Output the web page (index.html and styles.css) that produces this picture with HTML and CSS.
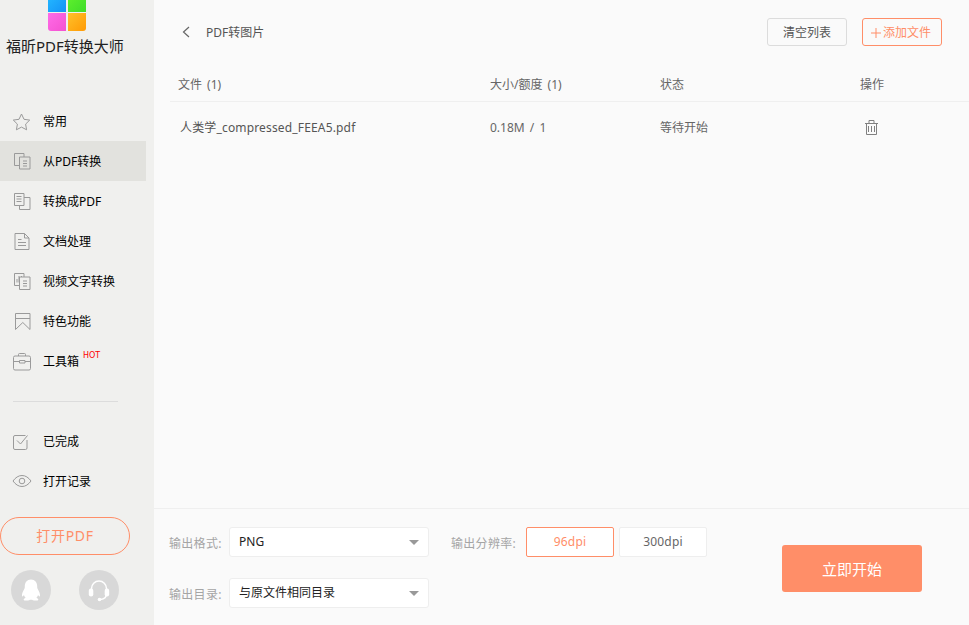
FILE: index.html
```html
<!DOCTYPE html>
<html lang="zh-CN">
<head>
<meta charset="utf-8">
<title>福昕PDF转换大师</title>
<link rel="stylesheet" href="styles.css">
</head>
<body>
<div class="app">
  <aside class="sidebar">
    <div class="logo">
      <span class="tile t1"></span><span class="tile t2"></span><span class="tile t3"></span><span class="tile t4"></span>
    </div>
    <div class="brand">福昕PDF转换大师</div>
    <nav class="nav">
      <div class="nav-item"><svg class="ico" viewBox="0 0 20 20"><path d="M9.500 3l2.500 5.300 5.700.8-4.100 4 1 5.700-5.100-2.700-5.100 2.700 1-5.700-4.100-4 5.700-.8z"/></svg><span class="nav-text">常用</span></div>
      <div class="nav-item active"><svg class="ico" viewBox="0 0 20 20"><path d="M7.500 14.500h-5v-12H12V6M7.500 6h10.500v12H7.500zM11 10h4M11 12.500h4M11 15h4"/></svg><span class="nav-text">从PDF转换</span></div>
      <div class="nav-item"><svg class="ico" viewBox="0 0 20 20"><path d="M2.500 2.500H12v12H2.500zM12 6.500h6V18.500H7.500v-4M4.500 5.500h5M4.500 8h5M4.500 10.500h5"/></svg><span class="nav-text">转换成PDF</span></div>
      <div class="nav-item"><svg class="ico" viewBox="0 0 20 20"><path d="M3 2.500h9.500L17 7v11.500H3zM12.500 2.500V7H17M6 8.500h3.500M6 11.500h8M6 14.500h8"/></svg><span class="nav-text">文档处理</span></div>
      <div class="nav-item"><svg class="ico" viewBox="0 0 20 20"><path d="M7.500 14.500h-5v-12H12V6M7.500 6h10.500v12.500H7.500zM5 8v3.500M7 5v6.500M9.500 5v1M11 10h4M11 12.500h4M11 15h4"/></svg><span class="nav-text">视频文字转换</span></div>
      <div class="nav-item"><svg class="ico" viewBox="0 0 20 20"><path d="M3.500 2.500h14.500v16l-7.200-7-7.300 7zM3.500 7.500h14.500"/></svg><span class="nav-text">特色功能</span></div>
      <div class="nav-item"><svg class="ico" viewBox="0 0 20 20"><path d="M1.500 6.500a1.500 1.500 0 0 1 1.500-1.500h14a1.500 1.500 0 0 1 1.500 1.500v11a1.500 1.500 0 0 1-1.500 1.500H3a1.500 1.500 0 0 1-1.500-1.500zM6.500 5V3.500a1 1 0 0 1 1-1h5a1 1 0 0 1 1 1V5M1.500 10.500h6M13 10.500h5.500M7.500 9.500h5.500v2.500H7.500z"/></svg><span class="nav-text">工具箱</span><sup class="hot">HOT</sup></div>
    </nav>
    <div class="divider"></div>
    <nav class="nav">
      <div class="nav-item"><svg class="ico" viewBox="0 0 20 20"><path d="M15 9v8a1.500 1.500 0 0 1-1.500 1.500H3A1.500 1.500 0 0 1 1.500 17V6A1.500 1.500 0 0 1 3 4.500h10.500M5 9.500l3.500 3.500 7-8.500"/></svg><span class="nav-text">已完成</span></div>
      <div class="nav-item"><svg class="ico" viewBox="0 0 20 20"><path d="M1 10C3.500 6.500 6.500 4.500 10 4.500s6.500 2 9 5.500c-2.500 3.500-5.500 5.500-9 5.500S3.500 13.500 1 10z"/><circle cx="10" cy="10" r="2.800"/></svg><span class="nav-text">打开记录</span></div>
    </nav>
    <button class="open-btn"><span class="open-text">打开PDF</span></button>
    <div class="contacts">
      <div class="circle">
        <svg viewBox="0 0 24 24" class="circle-ico"><path d="M12 1.500c-4 0-6.200 3-6.200 6.800 0 1.100 0 1.700-.5 2.700-1.300 2.200-2.600 4.700-2.300 6.800.2 1 .9.700 1.900-.9.300 1.100.9 2 1.700 2.800-1.200.5-2.100 1.200-1.900 2 .3 1 2.200 1 4.200.8 1-.1 1.600-.5 2-.7h2.200c.4.200 1 .6 2 .7 2 .2 3.900.2 4.200-.8.200-.8-.7-1.500-1.900-2 .8-.8 1.400-1.700 1.700-2.800 1 1.600 1.700 1.900 1.900.9.300-2.100-1-4.600-2.300-6.800-.5-1-.5-1.600-.5-2.700 0-3.800-2.200-6.800-6.200-6.800z"/></svg>
      </div>
      <div class="circle">
        <svg viewBox="0 0 24 24" class="circle-ico"><path class="band" d="M4.500 14V10.500a7.500 7.500 0 0 1 15 0V14M19.500 16c0 3.500-2.500 5-6 5.500"/><rect x="1.800" y="10.500" width="4.500" height="8" rx="2.200"/><rect x="17.700" y="10.500" width="4.500" height="8" rx="2.200"/><circle cx="12.500" cy="21.500" r="1.800"/></svg>
      </div>
    </div>
  </aside>
  <main class="main">
    <header class="topbar">
      <svg class="back" viewBox="0 0 8 12"><path d="M7 1L1.500 6 7 11"/></svg>
      <span class="page-title">PDF转图片</span>
      <button class="btn btn-plain">清空列表</button>
      <button class="btn btn-accent"><svg class="plus" viewBox="0 0 10 10"><path d="M5 0v10M0 5h10"/></svg>添加文件</button>
    </header>
    <section class="table">
      <div class="row head">
        <span>文件 (1)</span><span>大小/额度 (1)</span><span>状态</span><span>操作</span>
      </div>
      <div class="row body">
        <span class="name">人类学_compressed_FEEA5.pdf</span><span class="size">0.18M / 1</span><span>等待开始</span>
        <span><svg class="trash" viewBox="0 0 14 15"><path d="M0 3.500h13M4 3.500V.5h5v3M1.500 3.500V14.500h10V3.500M3.500 6v6M6.500 6v6M9.500 6v6"/></svg></span>
      </div>
    </section>
    <footer class="panel">
      <div class="form">
        <div class="field">
          <label class="label">输出格式:</label>
          <div class="select">PNG<i class="caret"></i></div>
          <label class="label res-label">输出分辨率:</label>
          <div class="opt selected">96dpi</div>
          <div class="opt">300dpi</div>
        </div>
        <div class="field">
          <label class="label">输出目录:</label>
          <div class="select">与原文件相同目录<i class="caret"></i></div>
        </div>
      </div>
      <button class="start">立即开始</button>
    </footer>
  </main>
</div>
</body>
</html>
```

FILE: styles.css
```css
* { box-sizing: border-box; }
html, body { margin: 0; padding: 0; }
body {
  width: 969px;
  height: 625px;
  overflow: hidden;
  font-family: "Noto Sans", "Noto Sans CJK SC", sans-serif;
  font-size: 12px;
  color: #000;
}
.app { display: flex; width: 969px; height: 625px; }

.sidebar {
  width: 154px;
  flex: none;
  background: #f0f0ee;
  display: flex;
  flex-direction: column;
}
.logo {
  width: 38px;
  height: 31px;
  margin-left: 48px;
  display: grid;
  grid-template-columns: 18px 18px;
  grid-template-rows: 12px 18px;
  gap: 1px 2px;
}
.tile { display: block; }
.t1 { background: linear-gradient(135deg, #22b4ff, #1492f6); }
.t2 { background: linear-gradient(135deg, #5cee2c, #3fdc2a); }
.t3 { background: linear-gradient(135deg, #ff6be8, #f452d0); border-bottom-left-radius: 3px; }
.t4 { background: linear-gradient(135deg, #ffc12a, #ff9a05); border-bottom-right-radius: 3px; }
.brand {
  margin: 5px 0 0 6px;
  height: 20px;
  line-height: 20px;
  font-size: 15px;
  color: #222;
  white-space: nowrap;
}
.nav { display: flex; flex-direction: column; }
.sidebar > .nav:first-of-type { margin-top: 45px; }
.nav-item {
  position: relative;
  display: flex;
  align-items: center;
  width: 146px;
  height: 40px;
  padding-left: 12px;
  line-height: 16px;
}
.nav-item.active { background: #e2e2de; }
.nav-text { padding-top: 2px; }
.ico {
  width: 20px;
  height: 20px;
  margin-right: 11px;
  flex: none;
  fill: none;
  stroke: #9a9a9a;
  stroke-width: 1;
}
.hot {
  position: absolute;
  left: 83px;
  top: 10px;
  font-family: "DejaVu Sans", sans-serif;
  font-size: 8px;
  line-height: 10px;
  color: #ff0000;
}
.divider {
  width: 105px;
  height: 1px;
  margin: 20px 0 19px 13px;
  background: #dcdcdc;
}
.open-btn {
  width: 130px;
  height: 38px;
  margin-top: 16px;
  padding: 0 0 2px;
  border: 1px solid #ff8e68;
  border-radius: 19px;
  background: transparent;
  color: #ff8e68;
  font: inherit;
  font-size: 14px;
}
.open-text { letter-spacing: .7px; }
.contacts { display: flex; gap: 28px; margin: 15px 0 0 11px; }
.circle {
  width: 40px;
  height: 40px;
  border-radius: 50%;
  background: #d8d8d8;
  display: flex;
  align-items: center;
  justify-content: center;
}
.circle-ico { width: 24px; height: 24px; fill: #fff; }
.band { fill: none; stroke: #fff; stroke-width: 1.500; }

.main {
  flex: 1;
  min-width: 0;
  background: #fafafa;
  display: flex;
  flex-direction: column;
}
.topbar {
  display: flex;
  align-items: center;
  height: 64px;
  padding: 0 27px 0 28px;
}
.back { width: 8px; height: 12px; fill: none; stroke: #666; stroke-width: 1.200; margin-right: 16px; }
.page-title { flex: 1; color: #555; font-size: 12px; }
.btn {
  width: 80px;
  height: 28px;
  padding: 0;
  border-radius: 3px;
  background: transparent;
  font: inherit;
}
.btn-plain { border: 1px solid #dcdcdc; color: #555; margin-right: 15px; }
.btn-accent { border: 1px solid #ff8e68; color: #ff8e68; padding-right: 2px; }
.plus { width: 10px; height: 10px; margin-right: 2px; vertical-align: -1px; fill: none; stroke: #ff8e68; stroke-width: 1; }

.table { flex: 1; padding-left: 16px; }
.row {
  display: grid;
  grid-template-columns: 312px 170px 200px 1fr;
  padding-left: 8px;
  color: #666;
}
.row.head {
  height: 38px;
  padding-top: 3px;
  align-items: center;
  border-bottom: 1px solid #efefef;
  word-spacing: 2px;
}
.row.body { height: 52px; padding-bottom: 2px; align-items: center; }
.name { padding-left: 2px; color: #555; letter-spacing: .16px; }
.size { word-spacing: 2px; }
.trash { display: block; width: 14px; height: 15px; margin-left: 5px; fill: none; stroke: #808080; stroke-width: 1; }

.panel {
  position: relative;
  height: 117px;
  border-top: 1px solid #efefef;
  padding: 18px 0 0 15px;
  display: flex;
}
.form { display: flex; flex-direction: column; gap: 21px; }
.field { display: flex; align-items: center; height: 30px; }
.label { width: 60px; padding-top: 2px; color: #a5a5a5; flex: none; font-size: 12px; letter-spacing: .3px; white-space: nowrap; }
.select {
  position: relative;
  width: 200px;
  height: 30px;
  line-height: 28px;
  padding-left: 9px;
  background: #fff;
  border: 1px solid #eee;
  border-radius: 3px;
  color: #222;
}
.caret {
  position: absolute;
  right: 9px;
  top: 12px;
  border: 5px solid transparent;
  border-top-color: #999;
  border-bottom: 0;
}
.res-label { margin-left: 22px; width: 75px; }
.opt {
  width: 88px;
  height: 30px;
  line-height: 28px;
  text-align: center;
  background: #fff;
  border: 1px solid #eee;
  border-radius: 2px;
  color: #666;
  margin-left: 5px;
  letter-spacing: .2px;
}
.opt.selected { border-color: #ff8e68; color: #ff8e68; margin-left: 0; }
.start {
  position: absolute;
  left: 628px;
  top: 36px;
  width: 140px;
  height: 47px;
  border: 0;
  border-radius: 3px;
  background: #ff8e68;
  color: #fff;
  font: inherit;
  font-size: 15px;
}
```
